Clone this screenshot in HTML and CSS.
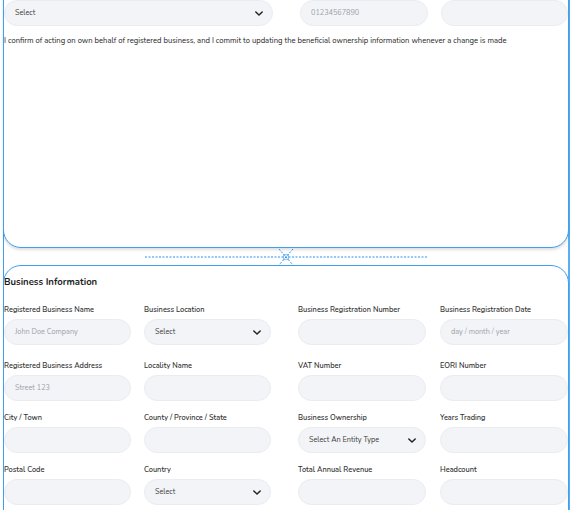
FILE: index.html
```html
<!DOCTYPE html>
<html>
<head>
<meta charset="utf-8">
<link rel="stylesheet" href="styles.css">
</head>
<body>
<div class="page">
  <section class="card card-top">
    <div class="row-top">
      <div class="input select"><span class="val">Select</span><svg class="chev" viewBox="0 0 10 6"><path d="M1 1l4 4 4-4" /></svg></div>
      <div class="pair pair-top">
        <div class="input"><span class="ph">01234567890</span></div>
        <div class="input"></div>
      </div>
    </div>
    <p class="confirm">I confirm of acting on own behalf of registered business, and I commit to updating the beneficial ownership information whenever a change is made</p>
  </section>

  <div class="divider">
    <svg class="handle" width="282" height="18" viewBox="0 0 282 18">
      <line x1="0" y1="9" x2="282" y2="9" class="dots"/>
      <line x1="134" y1="1" x2="148" y2="17" class="dots"/>
      <line x1="148" y1="1" x2="134" y2="17" class="dots"/>
      <rect x="138.5" y="6.5" width="5" height="5" class="box"/>
    </svg>
  </div>

  <section class="card card-bottom">
    <h2 class="title">Business Information</h2>
    <div class="form">
      <div class="row row-first">
        <div class="pair pair-a">
          <div class="field"><label>Registered Business Name</label><div class="input"><span class="ph">John Doe Company</span></div></div>
          <div class="field"><label>Business Location</label><div class="input select"><span class="val">Select</span><svg class="chev" viewBox="0 0 10 6"><path d="M1 1l4 4 4-4" /></svg></div></div>
        </div>
        <div class="pair pair-b">
          <div class="field"><label>Business Registration Number</label><div class="input"></div></div>
          <div class="field"><label>Business Registration Date</label><div class="input"><span class="ph">day / month / year</span></div></div>
        </div>
      </div>
      <div class="row">
        <div class="pair pair-a">
          <div class="field"><label>Registered Business Address</label><div class="input"><span class="ph">Street 123</span></div></div>
          <div class="field"><label>Locality Name</label><div class="input"></div></div>
        </div>
        <div class="pair pair-b">
          <div class="field"><label>VAT Number</label><div class="input"></div></div>
          <div class="field"><label>EORI Number</label><div class="input"></div></div>
        </div>
      </div>
      <div class="row">
        <div class="pair pair-a">
          <div class="field"><label>City / Town</label><div class="input"></div></div>
          <div class="field"><label>County / Province / State</label><div class="input"></div></div>
        </div>
        <div class="pair pair-b">
          <div class="field"><label>Business Ownership</label><div class="input select"><span class="val">Select An Entity Type</span><svg class="chev" viewBox="0 0 10 6"><path d="M1 1l4 4 4-4" /></svg></div></div>
          <div class="field"><label>Years Trading</label><div class="input"></div></div>
        </div>
      </div>
      <div class="row">
        <div class="pair pair-a">
          <div class="field"><label>Postal Code</label><div class="input"></div></div>
          <div class="field"><label>Country</label><div class="input select"><span class="val">Select</span><svg class="chev" viewBox="0 0 10 6"><path d="M1 1l4 4 4-4" /></svg></div></div>
        </div>
        <div class="pair pair-b">
          <div class="field"><label>Total Annual Revenue</label><div class="input"></div></div>
          <div class="field"><label>Headcount</label><div class="input"></div></div>
        </div>
      </div>
    </div>
  </section>
</div>
</body>
</html>
```

FILE: styles.css
```css
* { box-sizing: border-box; }

html, body {
  margin: 0;
  padding: 0;
  background: #ffffff;
  overflow: hidden;
}

body {
  font-family: "Nunito", "Lato", "Noto Sans", sans-serif;
  color: #2b2b2b;
  height: 510px;
}

.page {
  margin-left: 3px;
  width: 567px;
  min-height: 600px;
  border-left: 1px solid #3e9ef0;
  border-right: 2px solid #5aaef2;
}

.card {
  margin: 0 -1px;
  border: 1px solid #3e9ef0;
  border-radius: 18px;
  background: #fff;
}

.card-top {
  margin-top: -30px;
  height: 278px;
  padding-top: 29px;
  box-shadow: 0 2px 3px rgba(0, 0, 0, 0.13);
}

.card-bottom {
  padding-top: 9px;
  min-height: 300px;
}

.row-top {
  display: grid;
  grid-template-columns: 269px 268px;
  column-gap: 27px;
}

.pair {
  display: grid;
  grid-template-columns: 1fr 1fr;
}

.pair-top { column-gap: 13px; }
.pair-a { column-gap: 13px; }
.pair-b { column-gap: 14px; }

.input {
  height: 26px;
  border-radius: 13px;
  background: #f3f4f7;
  border: 1px solid #eaecf0;
  display: flex;
  align-items: center;
  padding: 0 10px;
  font-size: 7.3px;
}

.ph { color: #9da1a9; }
.val { color: #3a3a3a; flex: 1; }

.select { padding-right: 9px; }

.chev {
  width: 8px;
  height: 5px;
  fill: none;
  stroke: #222;
  stroke-width: 1.8;
  stroke-linecap: round;
  stroke-linejoin: round;
}

.confirm {
  margin: 10px 0 0;
  font-size: 7.65px;
  line-height: 10px;
  color: #1e1e1e;
}

.divider {
  height: 17px;
  display: flex;
  justify-content: center;
  align-items: center;
}

.handle { display: block; }

.dots {
  stroke: #2a93f0;
  stroke-width: 1;
  stroke-dasharray: 2 1.5;
}

.box {
  fill: none;
  stroke: #2a93f0;
  stroke-width: 1;
  stroke-dasharray: 1 1;
}

.title {
  margin: 0;
  font-size: 9.5px;
  line-height: 14px;
  font-weight: 700;
  color: #1c1c1c;
}

.form {
  margin-top: 16px;
  display: flex;
  flex-direction: column;
  row-gap: 12px;
}

.row {
  display: grid;
  grid-template-columns: 267px 270px;
  column-gap: 27px;
}

.row-first { margin-bottom: 4px; }

.field {
  display: flex;
  flex-direction: column;
}

.field label {
  font-size: 7.4px;
  line-height: 10px;
  font-weight: 600;
  color: #353535;
  margin-bottom: 4px;
}
```
